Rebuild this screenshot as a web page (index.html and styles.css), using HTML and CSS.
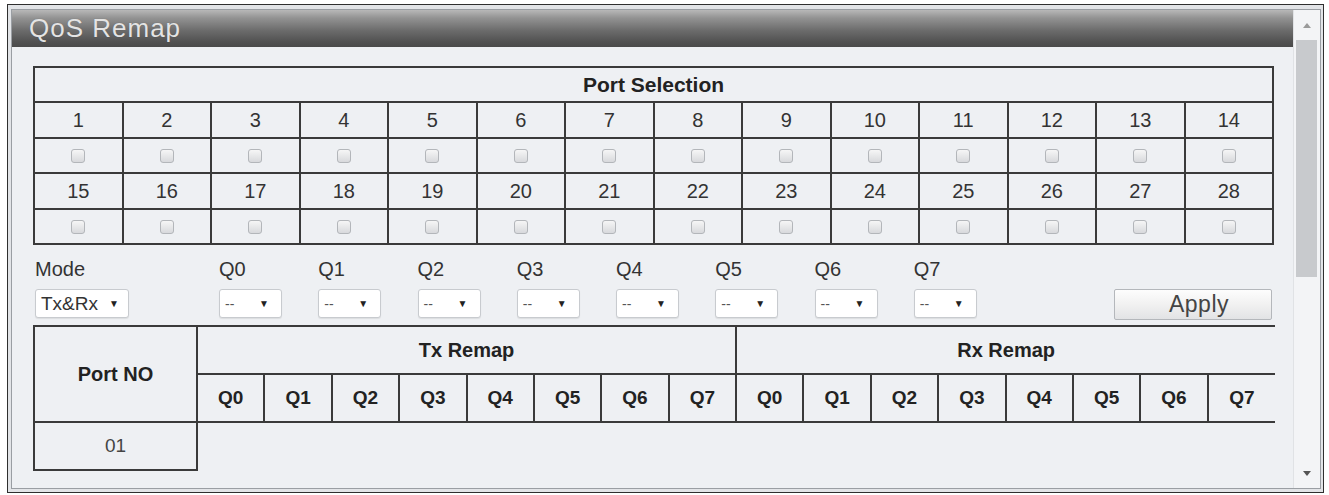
FILE: index.html
```html
<!DOCTYPE html>
<html>
<head>
<meta charset="utf-8">
<link rel="stylesheet" href="styles.css">
</head>
<body>
<div class="frame">
  <div class="inner">
    <div class="panel">
      <div class="title">QoS Remap</div>
      <div class="content">
        <table class="ports">
          <tr><th colspan="14" class="ps-head">Port Selection</th></tr>
          <tr class="num"><td>1</td><td>2</td><td>3</td><td>4</td><td>5</td><td>6</td><td>7</td><td>8</td><td>9</td><td>10</td><td>11</td><td>12</td><td>13</td><td>14</td></tr>
          <tr class="chk"><td><span class="cb"></span></td><td><span class="cb"></span></td><td><span class="cb"></span></td><td><span class="cb"></span></td><td><span class="cb"></span></td><td><span class="cb"></span></td><td><span class="cb"></span></td><td><span class="cb"></span></td><td><span class="cb"></span></td><td><span class="cb"></span></td><td><span class="cb"></span></td><td><span class="cb"></span></td><td><span class="cb"></span></td><td><span class="cb"></span></td></tr>
          <tr class="num"><td>15</td><td>16</td><td>17</td><td>18</td><td>19</td><td>20</td><td>21</td><td>22</td><td>23</td><td>24</td><td>25</td><td>26</td><td>27</td><td>28</td></tr>
          <tr class="chk"><td><span class="cb"></span></td><td><span class="cb"></span></td><td><span class="cb"></span></td><td><span class="cb"></span></td><td><span class="cb"></span></td><td><span class="cb"></span></td><td><span class="cb"></span></td><td><span class="cb"></span></td><td><span class="cb"></span></td><td><span class="cb"></span></td><td><span class="cb"></span></td><td><span class="cb"></span></td><td><span class="cb"></span></td><td><span class="cb"></span></td></tr>
        </table>

        <div class="controls">
          <div class="ctrl">
            <div class="lbl">Mode</div>
            <div class="sel sel-mode"><span class="val">Tx&amp;Rx</span><span class="arr">&#9660;</span></div>
          </div>
          <div class="ctrl"><div class="lbl">Q0</div><div class="sel sel-q"><span class="val">--</span><span class="arr">&#9660;</span></div></div>
          <div class="ctrl"><div class="lbl">Q1</div><div class="sel sel-q"><span class="val">--</span><span class="arr">&#9660;</span></div></div>
          <div class="ctrl"><div class="lbl">Q2</div><div class="sel sel-q"><span class="val">--</span><span class="arr">&#9660;</span></div></div>
          <div class="ctrl"><div class="lbl">Q3</div><div class="sel sel-q"><span class="val">--</span><span class="arr">&#9660;</span></div></div>
          <div class="ctrl"><div class="lbl">Q4</div><div class="sel sel-q"><span class="val">--</span><span class="arr">&#9660;</span></div></div>
          <div class="ctrl"><div class="lbl">Q5</div><div class="sel sel-q"><span class="val">--</span><span class="arr">&#9660;</span></div></div>
          <div class="ctrl"><div class="lbl">Q6</div><div class="sel sel-q"><span class="val">--</span><span class="arr">&#9660;</span></div></div>
          <div class="ctrl"><div class="lbl">Q7</div><div class="sel sel-q"><span class="val">--</span><span class="arr">&#9660;</span></div></div>
          <div class="ctrl ctrl-apply"><button class="apply">Apply</button></div>
        </div>

        <table class="remap">
          <colgroup>
            <col class="c-port">
            <col class="c-q"><col class="c-q"><col class="c-q"><col class="c-q"><col class="c-q"><col class="c-q"><col class="c-q"><col class="c-q">
            <col class="c-q"><col class="c-q"><col class="c-q"><col class="c-q"><col class="c-q"><col class="c-q"><col class="c-q"><col class="c-q">
          </colgroup>
          <tr>
            <th rowspan="2" class="port-no">Port NO</th>
            <th colspan="8" class="grp grp-tx">Tx Remap</th>
            <th colspan="8" class="grp grp-rx">Rx Remap</th>
          </tr>
          <tr class="qrow">
            <th>Q0</th><th>Q1</th><th>Q2</th><th>Q3</th><th>Q4</th><th>Q5</th><th>Q6</th><th class="tx-last">Q7</th>
            <th>Q0</th><th>Q1</th><th>Q2</th><th>Q3</th><th>Q4</th><th>Q5</th><th>Q6</th><th class="rx-last">Q7</th>
          </tr>
          <tr>
            <td class="port-val">01</td>
            <td colspan="16" class="empty"></td>
          </tr>
        </table>
      </div>
    </div>
    <div class="scrollbar">
      <div class="sb-up"><span class="tri-up"></span></div>
      <div class="sb-thumb"></div>
      <div class="sb-track"></div>
      <div class="sb-down"><span class="tri-down"></span></div>
    </div>
  </div>
</div>
</body>
</html>
```

FILE: styles.css
```css
html, body {
  margin: 0;
  padding: 0;
  background: #ffffff;
}

body {
  font-family: "Liberation Sans", Arial, sans-serif;
  color: #333;
}

.frame {
  margin: 4px 0 0 7px;
  width: 1317px;
  height: 489px;
  box-sizing: border-box;
  border: 1px solid #2f2f2f;
  padding: 4px 2px 3px 3px;
  background: #e2e4e7;
}

.inner {
  height: 100%;
  box-sizing: border-box;
  border: 1px solid #9a9ea3;
  display: flex;
  background: #eef0f3;
}

.panel {
  width: 1281px;
  display: flex;
  flex-direction: column;
  background: #eef0f3;
}

.title {
  height: 37px;
  line-height: 36px;
  padding-left: 17px;
  font-size: 26px;
  letter-spacing: 1px;
  color: #e4e4e4;
  background: linear-gradient(to bottom, #b8b8b8 0%, #929292 22%, #6c6c6c 55%, #525252 85%, #4a4a4a 100%);
  text-shadow: 0 0 1px rgba(0,0,0,0.25);
}

.content {
  padding: 19px 0 0 21px;
}

/* Port selection table */
.ports {
  width: 1241px;
  table-layout: fixed;
  border-collapse: collapse;
}

.ports th,
.ports td {
  border: 2px solid #3a3a3a;
  text-align: center;
  padding: 0;
}

.ports .ps-head {
  height: 33px;
  font-size: 21px;
  font-weight: bold;
  color: #222;
}

.ports .num td {
  height: 34px;
  font-size: 20px;
  color: #333;
}

.ports .chk td {
  height: 33px;
  line-height: 0;
}

.cb {
  display: inline-block;
  width: 12px;
  height: 12px;
  border: 1px solid #b3b6ba;
  border-radius: 3px;
  background: linear-gradient(to bottom, #f6f6f6, #d8d9dc);
  vertical-align: middle;
}

/* Controls row */
.controls {
  display: grid;
  grid-template-columns: 184px repeat(8, 99.25px) 1fr;
  width: 1239px;
  margin-left: 2px;
  padding-top: 12px;
}

.ctrl {
  display: flex;
  flex-direction: column;
}

.lbl {
  height: 24px;
  line-height: 24px;
  font-size: 20px;
  color: #333;
  margin-bottom: 8px;
}

.sel {
  height: 29px;
  box-sizing: border-box;
  background: #ffffff;
  border: 1px solid #c8cbcf;
  border-radius: 3px;
  box-shadow: 0 1px 1px rgba(0,0,0,0.08);
  display: flex;
  align-items: center;
  justify-content: space-between;
}

.sel-mode {
  width: 94px;
  padding: 0 9px 0 5px;
}

.sel-mode .val {
  font-size: 19px;
  color: #333;
}

.sel-q {
  width: 63px;
  padding: 0 12px 0 5px;
}

.sel-q .val {
  font-size: 14px;
  color: #555;
}

.arr {
  font-size: 10px;
  color: #222;
}

.ctrl-apply {
  align-items: flex-end;
  padding-top: 32px;
}

.apply {
  width: 158px;
  height: 31px;
  margin: 0 2px 0 0;
  padding: 0 0 0 12px;
  border: 1px solid #b4b7bb;
  border-radius: 2px;
  background: linear-gradient(to bottom, #fdfdfd 0%, #f1f1f1 50%, #e2e3e5 100%);
  font-family: "Liberation Sans", Arial, sans-serif;
  font-size: 23px;
  letter-spacing: 0.5px;
  color: #444;
  text-align: center;
  line-height: 29px;
}

/* Remap table */
.remap {
  margin-top: 5px;
  width: 1241px;
  table-layout: fixed;
  border-collapse: collapse;
}

.remap .c-port {
  width: 163px;
}

.remap .c-q {
  width: 67.375px;
}

.remap th,
.remap td {
  padding: 0;
  text-align: center;
  color: #222;
}

.remap .port-no {
  border: 2px solid #3a3a3a;
  font-size: 20px;
  font-weight: bold;
}

.remap .grp {
  height: 46px;
  border-top: 2px solid #3a3a3a;
  border-bottom: 2px solid #3a3a3a;
  font-size: 20px;
  font-weight: bold;
}

.remap .grp-tx {
  border-right: 2px solid #3a3a3a;
}

.remap .qrow th {
  height: 46px;
  border-bottom: 2px solid #3a3a3a;
  border-right: 2px solid #3a3a3a;
  font-size: 19px;
  font-weight: bold;
}

.remap .qrow th.rx-last {
  border-right: none;
}

.remap .port-val {
  height: 46px;
  border: 2px solid #3a3a3a;
  font-size: 19px;
  color: #444;
}

.remap .empty {
  border: none;
}

/* Scrollbar */
.scrollbar {
  width: 27px;
  display: flex;
  flex-direction: column;
  background: #f3f4f6;
  border-left: 1px solid #e0e2e5;
  box-sizing: border-box;
}

.sb-up {
  height: 30px;
  display: flex;
  justify-content: center;
  align-items: center;
}

.sb-thumb {
  height: 237px;
  margin: 0 3px 0 2px;
  background: #c8cacd;
}

.sb-track {
  flex: 1;
}

.sb-down {
  height: 30px;
  display: flex;
  justify-content: center;
  align-items: center;
}

.tri-up {
  width: 0;
  height: 0;
  border-left: 4px solid transparent;
  border-right: 4px solid transparent;
  border-bottom: 5px solid #9a9a9a;
}

.tri-down {
  width: 0;
  height: 0;
  border-left: 4px solid transparent;
  border-right: 4px solid transparent;
  border-top: 5px solid #555;
}
```
